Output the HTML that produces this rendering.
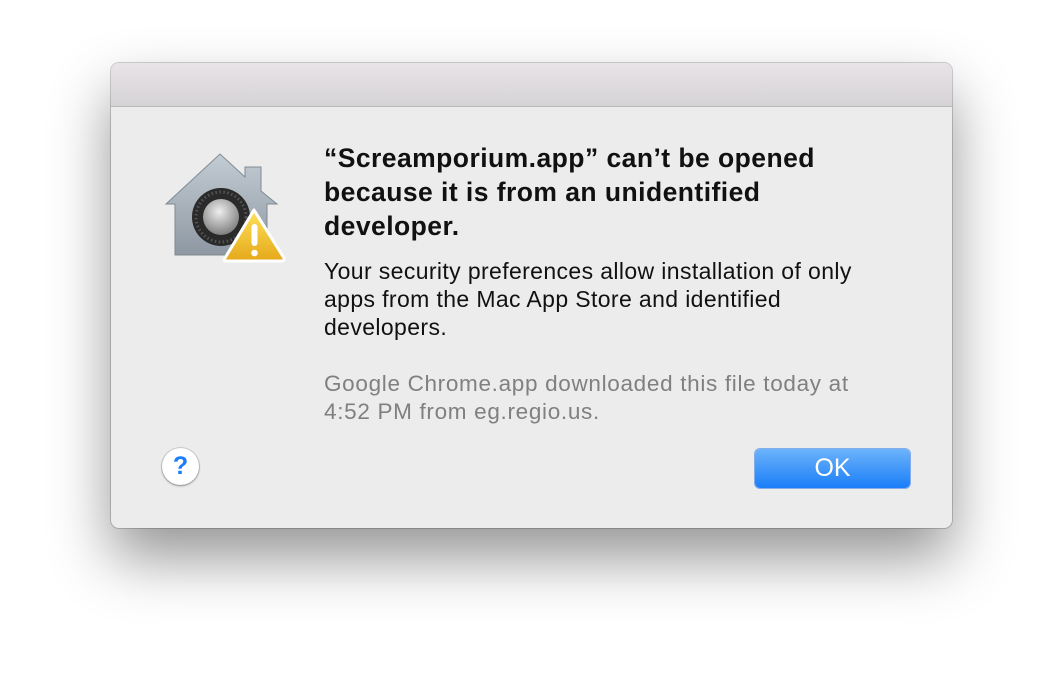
<!DOCTYPE html>
<html><head><style>
body{margin:0;width:1064px;height:688px;background:#fff;position:relative;overflow:hidden;font-family:"Liberation Sans",sans-serif}
.win{position:absolute;left:111px;top:63px;width:841px;height:465px;border-radius:8px;background:#ececec;box-shadow:0 30px 60px rgba(0,0,0,.42),0 0 0 1px rgba(0,0,0,.18);overflow:hidden}
.tb{height:43px;background:linear-gradient(#e8e4e8,#d6d3d6);border-bottom:1px solid #b9b9b9}
.t{position:absolute;left:213px;top:78px;font-weight:bold;font-size:26.5px;letter-spacing:.45px;line-height:34px;color:#111;white-space:nowrap}
.b{position:absolute;left:213px;top:194px;font-size:23px;letter-spacing:.38px;line-height:28px;color:#111;white-space:nowrap}
.g{position:absolute;left:213px;top:307px;font-size:22.5px;line-height:28px;color:#808080;white-space:nowrap;letter-spacing:.68px}
.ok{position:absolute;left:644px;top:386px;width:155px;height:39px;border-radius:5px;background:linear-gradient(#6cb3fa,#1a7ef8);color:#fff;font-size:25px;text-align:center;line-height:39px;box-shadow:0 0 0 1px rgba(30,110,230,.5)}
.help{position:absolute;left:51px;top:385px;width:37px;height:37px;border-radius:50%;background:#fff;box-shadow:0 1px 2px rgba(0,0,0,.35),0 0 0 1px rgba(0,0,0,.12);color:#1a7ef8;font-size:25px;font-weight:bold;text-align:center;line-height:37px}
</style></head><body>
<div class="win">
<div class="tb"></div>
<svg style="position:absolute;left:52px;top:84px" width="126" height="118" viewBox="0 0 126 118">
<defs><linearGradient id="h" x1="0" y1="0" x2="0" y2="1"><stop offset="0" stop-color="#c3ccd4"/><stop offset="1" stop-color="#8e98a2"/></linearGradient>
<linearGradient id="y" x1="0" y1="0" x2="0" y2="1"><stop offset="0" stop-color="#fde25a"/><stop offset="1" stop-color="#e6a81b"/></linearGradient>
<radialGradient id="k" cx=".45" cy=".35" r=".7"><stop offset="0" stop-color="#eee"/><stop offset="1" stop-color="#777"/></radialGradient></defs>
<path d="M3 57 L57 7 L82 30 L82 20 L98 20 L98 44 L114 57 L104 57 L104 108 L12 108 L12 57 Z" fill="url(#h)" stroke="#7f8a94" stroke-width="1"/>
<circle cx="58" cy="70" r="29" fill="#2a2a2a"/>
<circle cx="58" cy="70" r="25" fill="none" stroke="#555" stroke-width="3" stroke-dasharray="1.5 2.5"/>
<circle cx="58" cy="70" r="18" fill="url(#k)"/>
<path d="M91 63 L121 111 Q122 114 118 114 L64 114 Q60 114 62 111 Z" fill="url(#y)" stroke="#fff" stroke-width="3" stroke-linejoin="round"/>
<rect x="88.5" y="77" width="6" height="22" rx="3" fill="#fff"/><circle cx="91.5" cy="106" r="3.3" fill="#fff"/>
</svg>
<div class="t">“Screamporium.app” can’t be opened<br>because it is from an unidentified<br>developer.</div>
<div class="b">Your security preferences allow installation of only<br>apps from the Mac App Store and identified<br>developers.</div>
<div class="g">Google Chrome.app downloaded this file today at<br>4:52 PM from eg.regio.us.</div>
<div class="help">?</div>
<div class="ok">OK</div>
</div>
</body></html>
